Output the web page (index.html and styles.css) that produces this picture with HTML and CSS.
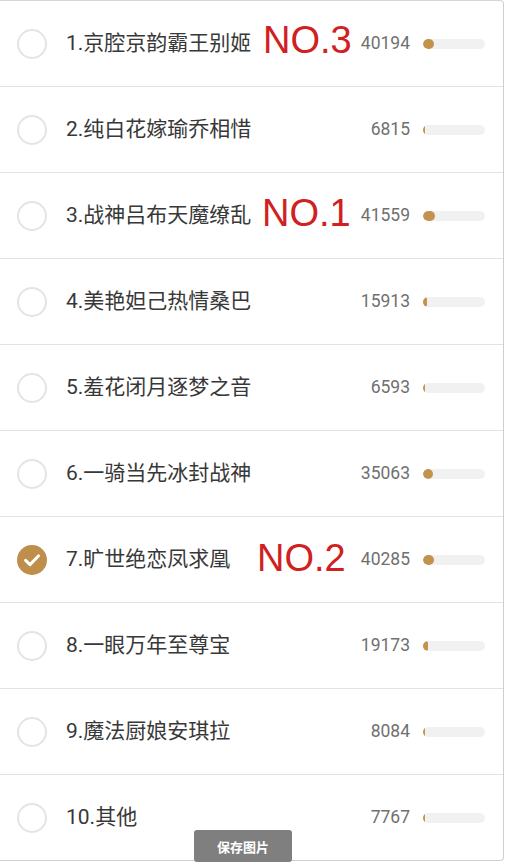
FILE: index.html
```html
<!DOCTYPE html>
<html lang="zh-CN">
<head>
<meta charset="utf-8">
<title>投票结果</title>
<link rel="stylesheet" href="styles.css">
</head>
<body>
<div class="card">
  <div class="row">
    <span class="radio"></span>
    <span class="name">1.京腔京韵霸王别姬</span>
    <span class="count">40194</span>
    <span class="bar"><span class="fill" style="width:18.15%"></span></span>
    <span class="mark mark-3">NO.3</span>
  </div>
  <div class="row">
    <span class="radio"></span>
    <span class="name">2.纯白花嫁瑜乔相惜</span>
    <span class="count">6815</span>
    <span class="bar"><span class="fill" style="width:3.08%"></span></span>
  </div>
  <div class="row">
    <span class="radio"></span>
    <span class="name">3.战神吕布天魔缭乱</span>
    <span class="count">41559</span>
    <span class="bar"><span class="fill" style="width:18.77%"></span></span>
    <span class="mark mark-1">NO.1</span>
  </div>
  <div class="row">
    <span class="radio"></span>
    <span class="name">4.美艳妲己热情桑巴</span>
    <span class="count">15913</span>
    <span class="bar"><span class="fill" style="width:7.19%"></span></span>
  </div>
  <div class="row">
    <span class="radio"></span>
    <span class="name">5.羞花闭月逐梦之音</span>
    <span class="count">6593</span>
    <span class="bar"><span class="fill" style="width:2.98%"></span></span>
  </div>
  <div class="row">
    <span class="radio"></span>
    <span class="name">6.一骑当先冰封战神</span>
    <span class="count">35063</span>
    <span class="bar"><span class="fill" style="width:15.83%"></span></span>
  </div>
  <div class="row">
    <span class="radio checked">
      <svg viewBox="0 0 30 30" width="30" height="30"><circle cx="15" cy="15" r="15" fill="#be8e4a"/><path d="M8.6 15.4 L13 19.6 L21.6 10.8" fill="none" stroke="#fff" stroke-width="3" stroke-linecap="round" stroke-linejoin="round"/></svg>
    </span>
    <span class="name">7.旷世绝恋凤求凰</span>
    <span class="count">40285</span>
    <span class="bar"><span class="fill" style="width:18.19%"></span></span>
    <span class="mark mark-2">NO.2</span>
  </div>
  <div class="row">
    <span class="radio"></span>
    <span class="name">8.一眼万年至尊宝</span>
    <span class="count">19173</span>
    <span class="bar"><span class="fill" style="width:8.66%"></span></span>
  </div>
  <div class="row">
    <span class="radio"></span>
    <span class="name">9.魔法厨娘安琪拉</span>
    <span class="count">8084</span>
    <span class="bar"><span class="fill" style="width:3.65%"></span></span>
  </div>
  <div class="row">
    <span class="radio"></span>
    <span class="name">10.其他</span>
    <span class="count">7767</span>
    <span class="bar"><span class="fill" style="width:3.51%"></span></span>
  </div>
</div>
<div class="save-btn">保存图片</div>
</body>
</html>
```
FILE: styles.css
```css
html, body {
  margin: 0;
  padding: 0;
  background: #ffffff;
}
body {
  font-family: Roboto, "Noto Sans CJK SC", sans-serif;
  position: relative;
  width: 508px;
  height: 866px;
  overflow: hidden;
}
.card {
  width: 503px;
  border-top: 1px solid #d6d6d6;
  border-right: 1px solid #cfcfcf;
  border-bottom: 1px solid #cfcfcf;
  border-radius: 0 4px 4px 0;
  background: #fff;
}
.row {
  position: relative;
  height: 85px;
  display: flex;
  align-items: center;
  padding: 0 18px 0 17px;
  border-top: 1px solid #e2e2e2;
}
.row:first-child {
  border-top: none;
}
.radio {
  width: 26px;
  height: 26px;
  border: 2px solid #e4e4e4;
  border-radius: 50%;
  flex: none;
  display: flex;
}
.radio.checked {
  border: none;
  width: 30px;
  height: 30px;
}
.name {
  flex: 1;
  margin-left: 19px;
  font-size: 21px;
  color: #383838;
  white-space: nowrap;
  line-height: 1;
  margin-top: -1px;
}
.count {
  font-size: 17.5px;
  color: #707070;
  margin-right: 13px;
  line-height: 1;
}
.bar {
  width: 62px;
  height: 10px;
  border-radius: 5px;
  background: #f1f1f1;
  overflow: hidden;
  flex: none;
  display: flex;
}
.fill {
  display: block;
  height: 100%;
  background: #c2924e;
  border-radius: 5px;
  min-width: 2px;
}
.mark {
  position: absolute;
  font-family: "Liberation Sans", Arial, sans-serif;
  font-size: 38px;
  line-height: 38px;
  color: #d02020;
  white-space: nowrap;
}
.mark-3 { left: 263px; top: 20px; }
.mark-1 { left: 262px; top: 21px; }
.mark-2 { left: 257px; top: 22px; }
.save-btn {
  position: absolute;
  left: 194px;
  top: 830px;
  width: 98px;
  height: 32px;
  background: #7f7f7f;
  border-radius: 3px;
  color: #fff;
  font-family: "Noto Sans CJK SC", sans-serif;
  font-size: 13px;
  font-weight: bold;
  display: flex;
  align-items: center;
  justify-content: center;
}
```
